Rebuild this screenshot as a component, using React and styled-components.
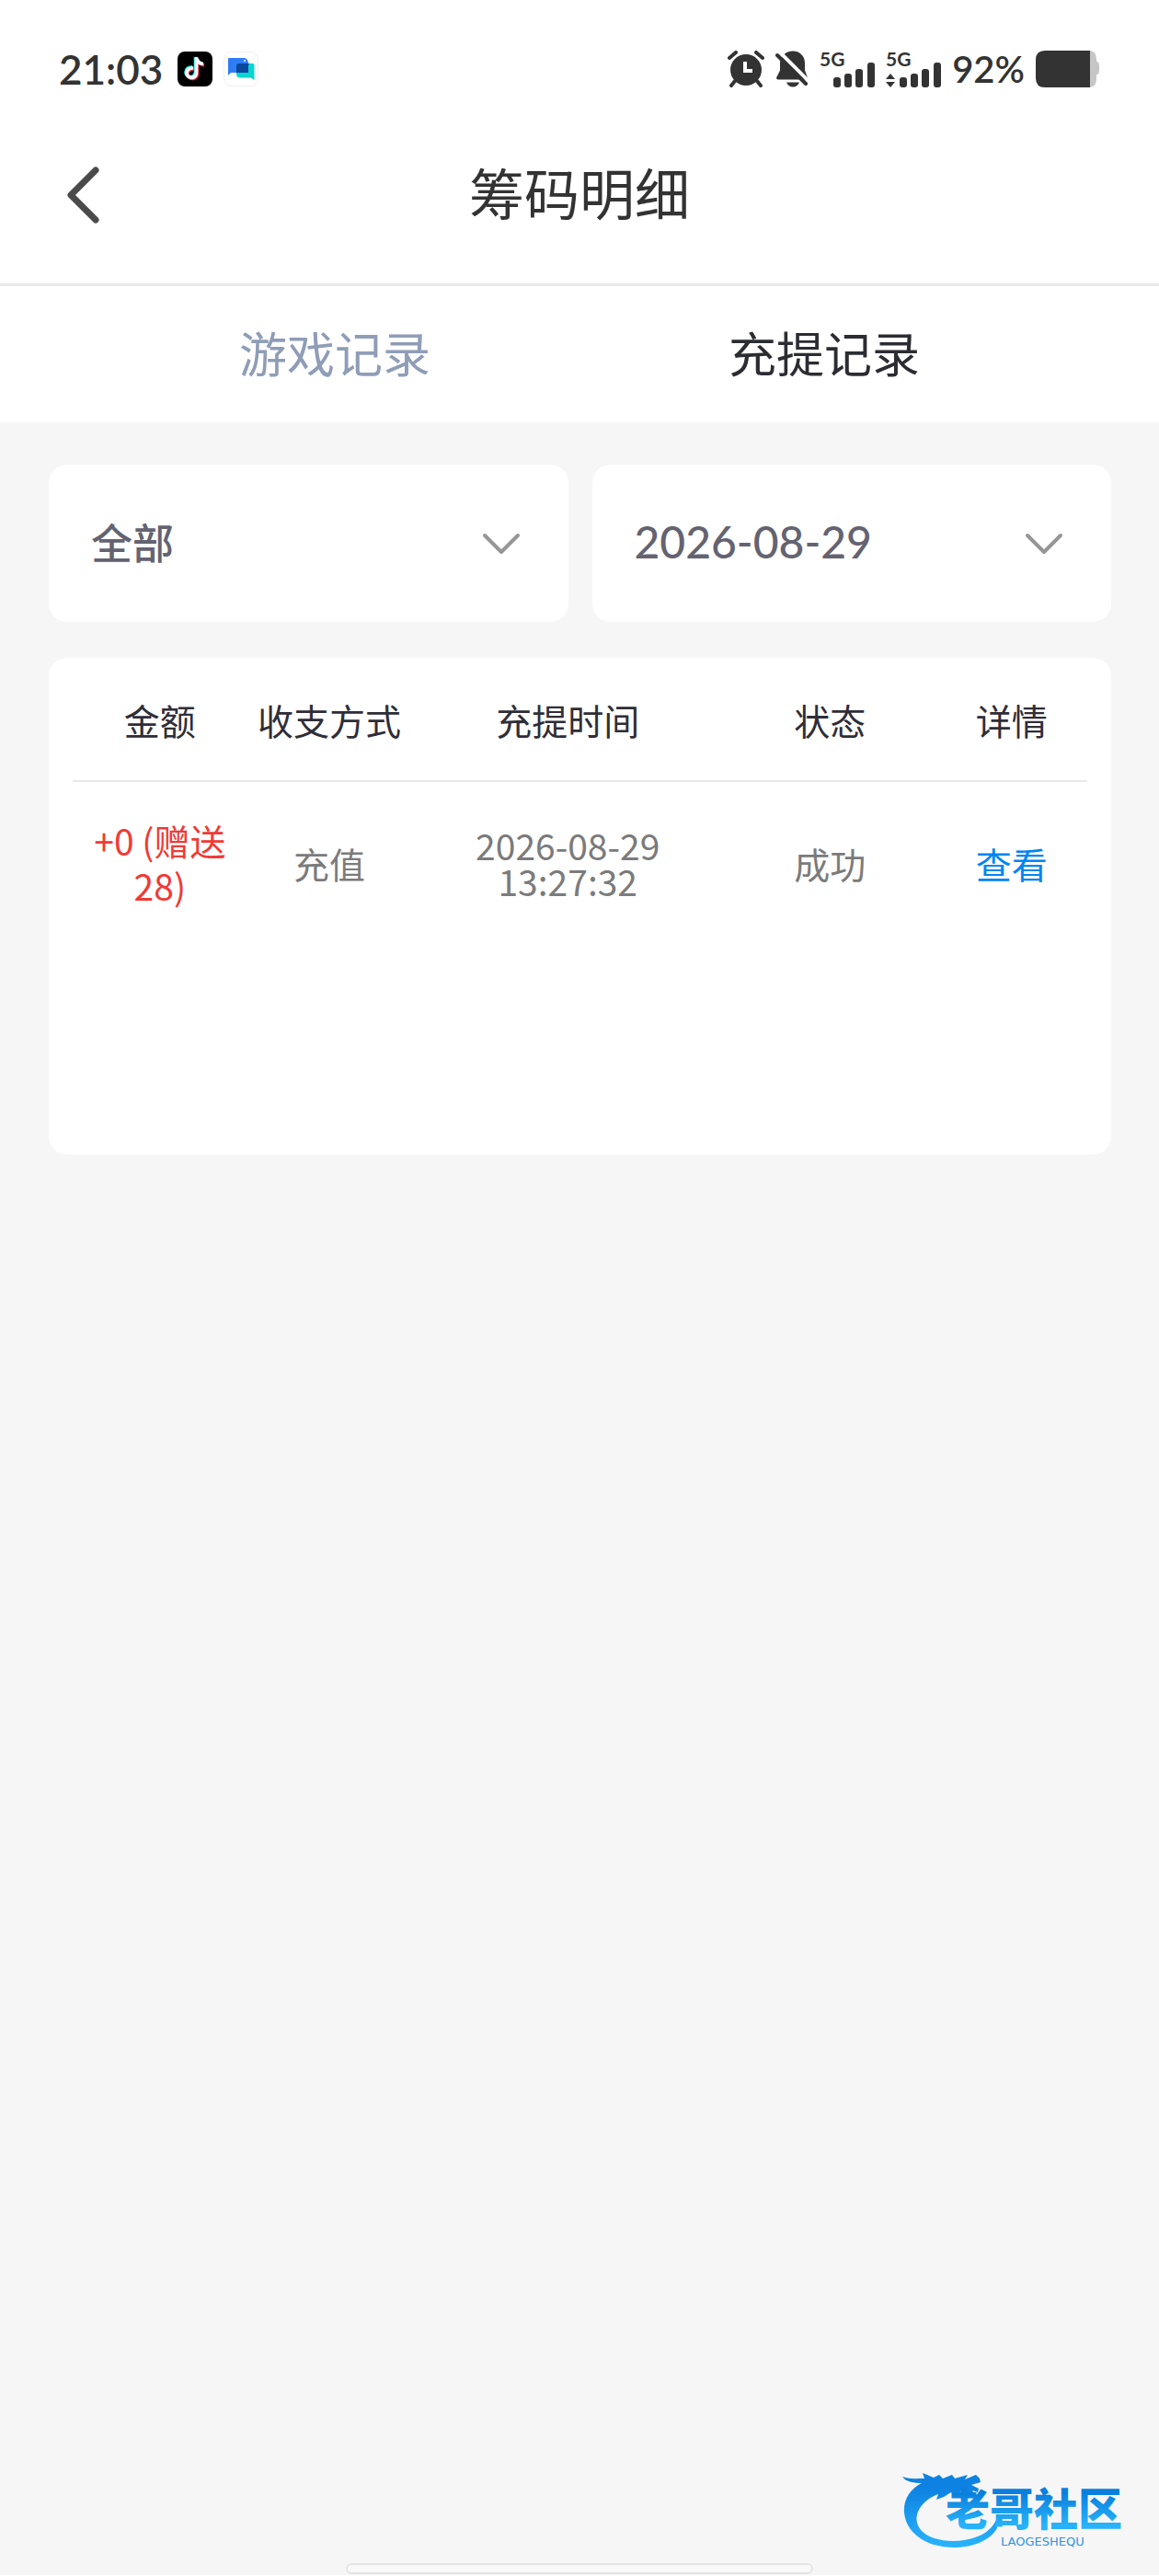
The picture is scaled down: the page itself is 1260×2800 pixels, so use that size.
import React, { useState } from 'react';

import styled, { createGlobalStyle } from 'styled-components';


const GlobalStyle = createGlobalStyle`
  * {
    box-sizing: border-box;
  }
  body {
    margin: 0;
    background-color: #f6f6f6;
    font-family: "Noto Sans CJK SC", "Noto Sans", sans-serif;
    color: #333;
  }
  button, select {
    font-family: inherit;
    border: none;
    background: none;
    padding: 0;
    margin: 0;
    cursor: pointer;
  }
`;

const Page = styled.div`
  position: relative;
  display: flex;
  flex-direction: column;
  min-height: 100vh;
  background-color: #f6f6f6;
  border-bottom: 1px solid #fff;
`;

const StatusBar = styled.div`
  display: flex;
  justify-content: space-between;
  align-items: center;
  height: 112px;
  padding: 38px 64px 0 64px;
  background-color: #fff;
  font-family: Lato, sans-serif;
  color: #333;
`;

const StatusGroup = styled.div`
  display: flex;
  align-items: center;
  gap: 12px;
`;

const Clock = styled.span`
  font-size: 44px;
  line-height: 44px;
  font-weight: 600;
  margin-right: 4px;
`;

const Percent = styled.span`
  font-size: 40px;
  line-height: 44px;
  font-weight: 600;
`;

const Header = styled.header`
  display: grid;
  grid-template-columns: 180px 1fr 180px;
  align-items: center;
  height: 199px;
  background-color: #fff;
  border-bottom: 3px solid #e9e9e9;
`;

const BackButton = styled.button`
  display: flex;
  align-items: center;
  height: 100%;
  padding: 4px 0 0 70px;
`;

const Title = styled.h1`
  margin: 0;
  padding-bottom: 4px;
  font-size: 60px;
  line-height: 80px;
  font-weight: 400;
  text-align: center;
`;

const Tabs = styled.nav`
  display: grid;
  grid-template-columns: 1fr 1fr;
  height: 148px;
  padding: 0 98px;
  background-color: #fff;
`;

const Tab = styled.button`
  padding-bottom: 4px;
  font-size: 52px;
  line-height: 76px;
  color: ${({ $active }) => $active ? '#2c2c33' : '#8f9db7'};
`;

const Content = styled.main`
  display: flex;
  flex-direction: column;
  gap: 39px;
  padding: 46px 52px 0 53px;
`;

const Filters = styled.div`
  display: grid;
  grid-template-columns: 1fr 1fr;
  gap: 26px;
`;

const Filter = styled.label`
  position: relative;
  display: flex;
  height: 171px;
  background-color: #fff;
  border-radius: 20px;

  svg {
    position: absolute;
    right: 51px;
    top: 72px;
    pointer-events: none;
  }
`;

const Select = styled.select`
  appearance: none;
  width: 100%;
  padding: 0 100px 4px 46px;
  border-radius: 20px;
  color: #646371;
  font-family: ${({ $digits }) => $digits ? 'Lato, sans-serif' : 'inherit'};
  font-size: ${({ $digits }) => $digits ? '48px' : '45px'};
  font-weight: 500;
`;

const Panel = styled.section`
  min-height: 540px;
  padding: 0 26px;
  background-color: #fff;
  border-radius: 20px;
`;

const Table = styled.table`
  width: 100%;
  table-layout: fixed;
  border-collapse: collapse;
  font-size: 39px;
  line-height: 49px;
  text-align: center;

  th {
    height: 134px;
    padding: 2px 0 0;
    font-weight: 400;
    color: #2f2e38;
    white-space: nowrap;
    border-bottom: 2px solid #e8e8e8;
  }
  td {
    height: 177px;
    padding: 0;
    color: #7b7b7b;
  }
`;

const Amount = styled.span`
  display: block;
  padding: 0 16px;
  color: #f03a36;
`;

const Time = styled.span`
  display: block;
  padding: 0 60px;
  line-height: 39px;
`;

const DetailLink = styled.a`
  color: #0085f2;
  text-decoration: none;
`;

const HomeBar = styled.div`
  width: 508px;
  height: 12px;
  margin: auto auto 1px;
  background-color: #f9f9f9;
  border: 2px solid #e4e4e4;
  border-radius: 6px;
`;

const Watermark = styled.div`
  position: absolute;
  right: 16px;
  bottom: 24px;
  width: 264px;
  height: 92px;
`;


const TikTokIcon = () => (
  <svg width="38" height="38" viewBox="0 0 38 38">
    <rect width="38" height="38" rx="8" fill="#000" />
    <g fill="none" strokeWidth="3.600">
      <path stroke="#25f4ee" d="M16 17c-4-.5-7 2-7 5.500s4 6 7.500 4.500c2-1 3-3 3-5V6c.5 4 3 6 7 7" />
      <path stroke="#fe2c55" d="M18 19c-4-.5-7 2-7 5.500s4 6 7.500 4.500c2-1 3-3 3-5V8c.5 4 3 6 7.500 7" />
      <path stroke="#fff" d="M17 18c-4-.5-7 2-7 5.500s4 6 7.500 4.500c2-1 3-3 3-5V6.500c.5 4 3 6.500 7.500 7" />
    </g>
  </svg>
);

const ChatIcon = () => (
  <svg width="38" height="38" viewBox="0 0 38 38">
    <rect x="0.500" y="0.500" width="37" height="37" rx="8" fill="#fff" stroke="#f0f0f0" />
    <path fill="#2f7df6" d="M6 7h16c3 0 5 2.500 5 6v10H8l-3 3V8q0-1 1-1z" />
    <path fill="#0bd5d0" d="M16 13h16q1.500 0 1.500 1.500V31l-4-2.500H18c-2.500 0-4-1.500-4-4V15q0-2 2-2z" />
    <path fill="#0b479d" d="M16 13h12l-1 2v8H14v-8q0-2 2-2z" />
    <circle cx="23" cy="10" r="1" fill="#fff" />
  </svg>
);

const AlarmIcon = () => (
  <svg width="40" height="40" viewBox="0 0 40 40" fill="none" stroke="#333" strokeWidth="4">
    <circle cx="20" cy="21" r="17" fill="#333" stroke="none" />
    <path d="M2 8l7-6M31 2l7 6" strokeLinecap="round" />
    <path d="M8 33l-4 5M32 33l4 5" strokeLinecap="round" />
    <path d="M19 12v10h8" stroke="#fff" />
  </svg>
);

const BellOffIcon = () => (
  <svg width="36" height="40" viewBox="0 0 36 40">
    <path fill="#333" d="M19 0.500c8 0 13 6 13 13v8l3 8q0 2-2 2H3q-2 0-2-2l4-8v-8c0-7 6-13 14-13z" />
    <path fill="#333" d="M12 34.500h14c-1 3-4 5-7 5s-6-2-7-5z" />
    <path stroke="#fff" strokeWidth="4" d="M4 1l34 34" />
    <path stroke="#333" strokeWidth="4" strokeLinecap="round" d="M2 5l31 31" />
  </svg>
);

const Signal = ({ arrows }) => (
  <svg width="60" height="56" viewBox="0 -8 60 56" fill="#333">
    <text x="0" y="17" fontFamily="Lato, sans-serif" fontSize="21" fontWeight="700">5G</text>
    {arrows && <path d="M0 31l5-6 5 6zM0 34h10l-5 6z" />}
    <rect x="15" y="29" width="8" height="11" rx="3" />
    <rect x="27" y="25" width="8" height="15" rx="3" />
    <rect x="39" y="20" width="8" height="20" rx="3" />
    <rect x="52" y="13" width="8" height="27" rx="3" />
  </svg>
);

const BatteryIcon = () => (
  <svg width="70" height="40" viewBox="0 0 70 40">
    <path fill="#c6c6c6" d="M50 0h7q9 0 9 9v3h1q2 1 2 4v6q0 3-2 4h-1v5q0 9-9 9h-7z" />
    <path fill="#333" d="M10 0h49v40H10q-10 0-10-10V10Q0 0 10 0z" />
  </svg>
);

const BackIcon = () => (
  <svg width="42" height="64" viewBox="0 0 42 64" fill="none" stroke="#4a4a4a" strokeWidth="7" strokeLinecap="round" strokeLinejoin="round">
    <path d="M34 5L7 32l27 27" />
  </svg>
);

const ArrowDown = () => (
  <svg width="44" height="28" viewBox="0 0 44 28" fill="none" stroke="#969696" strokeWidth="4" strokeLinecap="round" strokeLinejoin="round">
    <path d="M4 5l18 18L40 5" />
  </svg>
);

const Logo = () => (
  <svg width="264" height="92" viewBox="0 0 264 92">
    <defs>
      <linearGradient id="dragon" x1="0" y1="0" x2="0" y2="1">
        <stop offset="0.200" stopColor="#0e82e2" />
        <stop offset="1" stopColor="#29b4fb" />
      </linearGradient>
      <linearGradient id="word" x1="0" y1="0" x2="0" y2="1">
        <stop offset="0.300" stopColor="#0a7fdd" />
        <stop offset="0.800" stopColor="#27b3fa" />
      </linearGradient>
    </defs>
    {/* whisker, head, then the body curling under the name */}
    <path
      fill="url(#dragon)"
      d="M1 9c8 3 15 2 24 2l-2-6 12 5 6-3 4 4 10-4 3 4 14-4-3 5 12-5 4 4 1 4-10 3 8 4-1 4-6-2 3 5-4 1-8-6-11 5-3-3-8 5-8 3 2-6c-9 3-18 10-22 19-4 10 0 19 9 25 15 9 38 9 56 2 10-4 16-10 20-18l1 9c-8 14-27 21-47 21C28 86 5 71 3 48 2 34 9 23 22 16c-8 0-17-1-21-7z"
    />
    <text x="48" y="62" fill="url(#word)" fontFamily="Noto Sans CJK SC, sans-serif" fontSize="48" fontWeight="900">老哥社区</text>
    <text x="108" y="84" fill="#2f95dd" fontFamily="DejaVu Sans, sans-serif" fontSize="13">LAOGESHEQU</text>
  </svg>
);


const records = [
  { amount: '+0 (赠送28)', type: '充值', time: '2026-08-29 13:27:32', status: '成功' },
];

const App = () => {
  const [tab, setTab] = useState('充提记录');

  return (
    <Page>
      <GlobalStyle />
      <StatusBar>
        <StatusGroup>
          <Clock>21:03</Clock>
          <TikTokIcon />
          <ChatIcon />
        </StatusGroup>
        <StatusGroup>
          <AlarmIcon />
          <BellOffIcon />
          <Signal />
          <Signal arrows />
          <Percent>92%</Percent>
          <BatteryIcon />
        </StatusGroup>
      </StatusBar>

      <Header>
        <BackButton aria-label="返回"><BackIcon /></BackButton>
        <Title>筹码明细</Title>
      </Header>

      <Tabs>
        {['游戏记录', '充提记录'].map((name) => (
          <Tab key={name} $active={tab === name} onClick={() => setTab(name)}>{name}</Tab>
        ))}
      </Tabs>

      <Content>
        <Filters>
          <Filter>
            <Select aria-label="类型">
              <option>全部</option>
            </Select>
            <ArrowDown />
          </Filter>
          <Filter>
            <Select $digits aria-label="日期">
              <option>2026-08-29</option>
            </Select>
            <ArrowDown />
          </Filter>
        </Filters>

        <Panel>
          <Table>
            <colgroup>
              <col width="17.2%" />
              <col width="16.2%" />
              <col width="30.8%" />
              <col width="20.9%" />
              <col width="14.9%" />
            </colgroup>
            <thead>
              <tr>
                <th>金额</th>
                <th>收支方式</th>
                <th>充提时间</th>
                <th>状态</th>
                <th>详情</th>
              </tr>
            </thead>
            <tbody>
              {records.map((item) => (
                <tr key={item.time}>
                  <td><Amount>{item.amount}</Amount></td>
                  <td>{item.type}</td>
                  <td><Time>{item.time}</Time></td>
                  <td>{item.status}</td>
                  <td><DetailLink href="#detail">查看</DetailLink></td>
                </tr>
              ))}
            </tbody>
          </Table>
        </Panel>
      </Content>

      <HomeBar />
      <Watermark><Logo /></Watermark>
    </Page>
  )
}

export default App
